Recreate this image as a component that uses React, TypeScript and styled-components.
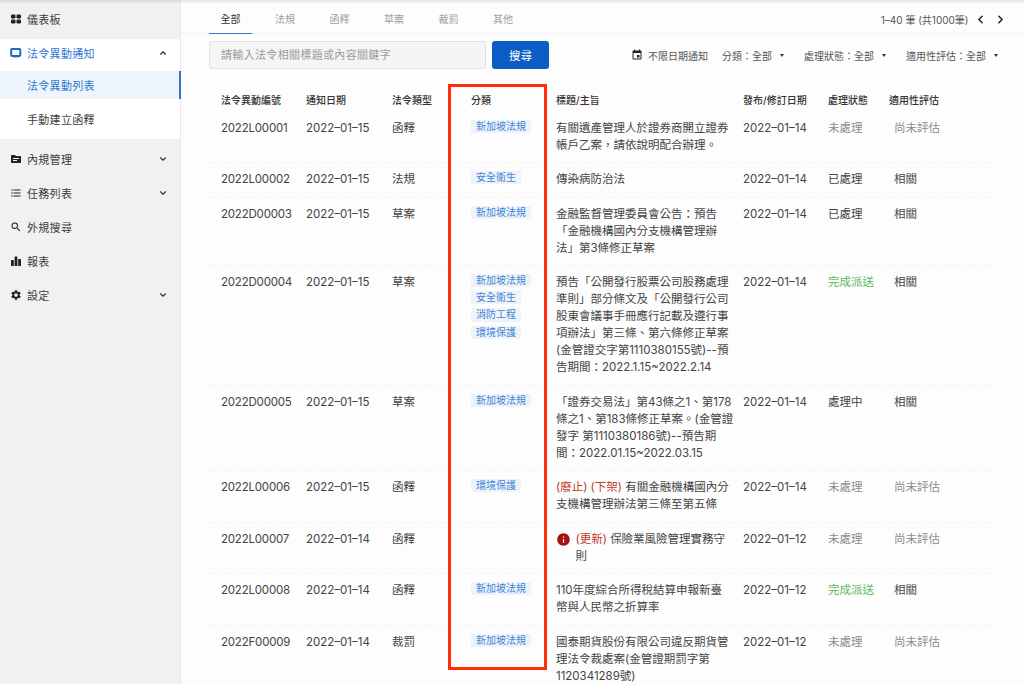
import { ReactNode } from 'react';
import styled, { createGlobalStyle } from 'styled-components';
import {
  ChevronDown,
  ChevronLeft,
  ChevronRight,
  ChevronUp,
} from 'lucide-react';
import {
  MdEvent,
  MdFormatListBulleted,
  MdInfo,
  MdSearch,
  MdSettings,
  MdTopic,
} from 'react-icons/md';

const fontStack = `Inter, "Noto Sans CJK TC", sans-serif`;

const GlobalStyle = createGlobalStyle`
  html, body {
    margin: 0;
    padding: 0;
    height: 684px;
    overflow: hidden;
    background: #fdfdfd;
    font-family: ${fontStack};
    color: #3a3a3a;
  }
`;

const Page = styled.div`
  position: relative;
  display: flex;
  width: 1024px;
  height: 684px;
  overflow: hidden;

  &::before {
    content: '';
    position: absolute;
    inset: 0 0 auto 0;
    height: 4px;
    background: linear-gradient(rgba(0, 0, 0, 0.09), rgba(0, 0, 0, 0));
    pointer-events: none;
  }
`;

const Sidebar = styled.nav`
  flex: none;
  width: 180px;
  height: 684px;
  background: #f1f1f1;
  border-right: 1px solid #e8e8e8;
`;

const NavItem = styled.div`
  display: flex;
  align-items: center;
  box-sizing: border-box;
  height: 34px;
  padding: 0 12px 0 10px;
  font-size: 11px;
  letter-spacing: 0.3px;
  color: #3d3d3d;

  svg.lead {
    flex: none;
    width: 12px;
    height: 12px;
    margin-right: 5px;
    color: #222;
  }

  svg.chev {
    color: #333;
    stroke-width: 2.6;
  }

  span {
    flex: 1;
  }
`;

const TopItem = styled(NavItem)`
  height: 39px;
  padding-bottom: 1px;
`;

const Group = styled.div`
  height: 100px;
  margin-bottom: 3px;
  background: #fff;
`;

const GroupHead = styled(NavItem)`
  height: 32px;
  padding-bottom: 4px;
  color: #2f76d2;

  svg.lead {
    color: #1d68c9;
  }
`;

const SubItem = styled.div<{ $active?: boolean }>`
  display: flex;
  align-items: center;
  box-sizing: border-box;
  height: 28px;
  padding-left: 27px;
  font-size: 11px;
  letter-spacing: 0.3px;
  color: ${(p) => (p.$active ? '#2f76d2' : '#3d3d3d')};
  background: ${(p) => (p.$active ? '#eef4fb' : 'transparent')};
  border-right: ${(p) => (p.$active ? '2px solid #2f76d2' : 'none')};
  margin-right: ${(p) => (p.$active ? '-1px' : '0')};
`;

const PlainSubItem = styled(SubItem)`
  height: 40px;
`;

const Main = styled.main`
  flex: 1;
  min-width: 0;
`;

const TabBar = styled.div`
  display: flex;
  align-items: center;
  gap: 11.5px;
  height: 33px;
  padding: 0 17px 0 28px;
  border-bottom: 1px solid #f4f4f4;
`;

const Tab = styled.div<{ $active?: boolean }>`
  position: relative;
  height: 33px;
  padding: 0 11.5px;
  line-height: 38px;
  font-size: 10px;
  color: ${(p) => (p.$active ? '#333' : '#a0a0a0')};

  &::after {
    content: '';
    display: ${(p) => (p.$active ? 'block' : 'none')};
    position: absolute;
    left: 0;
    right: 0;
    bottom: -1px;
    height: 1.5px;
    background: #2f76d2;
  }
`;

const Pager = styled.div`
  margin-left: auto;
  display: flex;
  align-items: center;
  font-size: 10px;
  color: #555;
  padding-top: 5px;
`;

const PagerBtn = styled.span`
  display: flex;
  margin-left: 5.5px;

  svg {
    width: 13px;
    height: 13px;
    color: #222;
    stroke-width: 2.8;
  }

  & + & {
    margin-left: 7px;
  }
`;

const Toolbar = styled.div`
  display: flex;
  align-items: center;
  height: 28px;
  margin-top: 7px;
  padding: 0 26px 0 28px;
`;

const SearchInput = styled.div`
  box-sizing: border-box;
  width: 277px;
  height: 28px;
  padding-left: 11px;
  line-height: 27px;
  font-size: 11px;
  letter-spacing: 0.33px;
  color: #9b9b9b;
  background: #f5f5f5;
  border: 1px solid #e2e2e2;
  border-radius: 3px;
`;

const SearchButton = styled.button`
  width: 57px;
  height: 28px;
  margin-left: 6px;
  padding: 0;
  border: none;
  border-radius: 3px;
  background: #0c5cc6;
  color: #fff;
  font: 11.5px ${fontStack};
`;

const Filters = styled.div`
  margin-left: auto;
  display: flex;
  align-items: center;
  font-size: 10px;
  color: #555;
  white-space: nowrap;
`;

const DateFilter = styled.div`
  display: flex;
  align-items: center;
  gap: 5px;
  margin-right: 14px;

  svg {
    width: 12px;
    height: 12px;
    color: #222;
  }
`;

const Filter = styled.div`
  display: flex;
  align-items: center;

  & + & {
    margin-left: 20px;
  }

  &::after {
    content: '';
    margin-left: 8px;
    border: 2.5px solid transparent;
    border-top: 3px solid #333;
    border-bottom: none;
  }
`;

const Table = styled.div`
  width: 787px;
  margin: 16px 0 0 28px;
`;

const gridColumns = '97px 86px 79px 85px 187px 85px 66px 1fr';

const HeadRow = styled.div`
  display: grid;
  grid-template-columns: ${gridColumns};
  box-sizing: border-box;
  height: 26.5px;
  padding-top: 1.5px;
  align-items: center;
  font-size: 10px;
  font-weight: 500;
  color: #333;
`;

const HeadCell = styled.div<{ $first?: boolean; $last?: boolean }>`
  padding-left: ${(p) => (p.$first ? '12px' : '0')};
  margin-left: ${(p) => (p.$last ? '-5px' : '0')};
  white-space: nowrap;
`;

const Row = styled.div`
  display: grid;
  grid-template-columns: ${gridColumns};
  padding: 8px 0 8.5px;
  border-bottom: 1px dashed #f3f3f3;
  font-size: 11.5px;
  line-height: 17px;
  color: #444;
`;

const Cell = styled.div`
  min-width: 0;
`;

const IdCell = styled.div`
  padding-left: 12px;
  letter-spacing: -0.2px;
`;

const TitleCell = styled.div`
  padding-right: 10px;
`;

const FixedLines = styled.div`
  white-space: pre;
`;

const TagList = styled.div`
  display: flex;
  flex-direction: column;
  align-items: flex-start;
  gap: 4px;
`;

const Tag = styled.span`
  height: 13.2px;
  padding: 0 5px;
  border-radius: 2px;
  background: #eef3fa;
  color: #3f83d8;
  font-size: 10px;
  line-height: 13px;
`;

const Status = styled.span<{ $tone?: 'muted' | 'done' }>`
  color: ${(p) =>
    p.$tone === 'muted' ? '#8c8c8c' : p.$tone === 'done' ? '#5cb85c' : '#444'};
`;

const Flag = styled.span`
  color: #c0392b;
`;

const AlertTitle = styled.div`
  display: flex;
  gap: 4.5px;
`;

const Alert = styled(MdInfo)`
  flex: none;
  width: 15px;
  height: 15px;
  margin-top: 1px;
  color: #a80f0f;
`;

const Callout = styled.div`
  position: absolute;
  left: 448px;
  top: 84px;
  width: 99px;
  height: 586px;
  box-sizing: border-box;
  border: 3px solid #ff2d0a;
  pointer-events: none;
`;

const DashboardIcon = () => (
  <svg className="lead" viewBox="0 0 12 12" fill="currentColor">
    <rect x="1" y="1.5" width="4.5" height="4" rx="1.2" />
    <rect x="6.5" y="1.5" width="4.5" height="4" rx="1.2" />
    <rect x="1" y="6.5" width="4.5" height="4" rx="1.2" />
    <rect x="6.5" y="6.5" width="4.5" height="4" rx="1.2" />
  </svg>
);

const NoticeIcon = () => (
  <svg className="lead" viewBox="0 0 12 12" fill="none">
    <rect
      x="1.2"
      y="2"
      width="9.1"
      height="7"
      rx="0.8"
      stroke="currentColor"
      strokeWidth="2"
    />
    <rect x="3" y="9" width="5.5" height="1.4" fill="currentColor" />
  </svg>
);

const ReportIcon = () => (
  <svg className="lead" viewBox="0 0 12 12" fill="currentColor">
    <rect x="1" y="5" width="2.8" height="6" rx="0.5" />
    <rect x="4.6" y="1.5" width="2.8" height="9.5" rx="0.5" />
    <rect x="8.2" y="4" width="2.8" height="7" rx="0.5" />
  </svg>
);

type Item = {
  id: string;
  notified: string;
  type: string;
  tags: string[];
  title: ReactNode;
  published: string;
  status: string;
  fit: string;
};

const rows: Item[] = [
  {
    id: '2022L00001',
    notified: '2022–01–15',
    type: '函釋',
    tags: ['新加坡法規'],
    title: '有關遺產管理人於證券商開立證券帳戶乙案\uFF0C請依說明配合辦理。',
    published: '2022–01–14',
    status: '未處理',
    fit: '尚未評估',
  },
  {
    id: '2022L00002',
    notified: '2022–01–15',
    type: '法規',
    tags: ['安全衛生'],
    title: '傳染病防治法',
    published: '2022–01–14',
    status: '已處理',
    fit: '相關',
  },
  {
    id: '2022D00003',
    notified: '2022–01–15',
    type: '草案',
    tags: ['新加坡法規'],
    title:
      '金融監督管理委員會公告\uFF1A預告「金融機構國內分支機構管理辦法」第3條修正草案',
    published: '2022–01–14',
    status: '已處理',
    fit: '相關',
  },
  {
    id: '2022D00004',
    notified: '2022–01–15',
    type: '草案',
    tags: ['新加坡法規', '安全衛生', '消防工程', '環境保護'],
    title:
      '預告「公開發行股票公司股務處理準則」部分條文及「公開發行公司股東會議事手冊應行記載及遵行事項辦法」第三條、第六條修正草案(金管證交字第1110380155號)--預告期間\uFF1A2022.1.15~2022.2.14',
    published: '2022–01–14',
    status: '完成派送',
    fit: '相關',
  },
  {
    id: '2022D00005',
    notified: '2022–01–15',
    type: '草案',
    tags: ['新加坡法規'],
    title: (
      <FixedLines>
        {
          '「證券交易法」第43條之1、第178\n條之1、第183條修正草案。(金管證\n發字 第1110380186號)--預告期\n間\uFF1A2022.01.15~2022.03.15'
        }
      </FixedLines>
    ),
    published: '2022–01–14',
    status: '處理中',
    fit: '相關',
  },
  {
    id: '2022L00006',
    notified: '2022–01–15',
    type: '函釋',
    tags: ['環境保護'],
    title: (
      <>
        <Flag>(廢止) (下架)</Flag> 有關金融機構國內分支機構管理辦法第三條至第五條
      </>
    ),
    published: '2022–01–14',
    status: '未處理',
    fit: '尚未評估',
  },
  {
    id: '2022L00007',
    notified: '2022–01–14',
    type: '函釋',
    tags: [],
    title: (
      <AlertTitle>
        <Alert />
        <div>
          <Flag>(更新)</Flag> 保險業風險管理實務守則
        </div>
      </AlertTitle>
    ),
    published: '2022–01–12',
    status: '未處理',
    fit: '尚未評估',
  },
  {
    id: '2022L00008',
    notified: '2022–01–14',
    type: '函釋',
    tags: ['新加坡法規'],
    title: '110年度綜合所得稅結算申報新臺幣與人民幣之折算率',
    published: '2022–01–12',
    status: '完成派送',
    fit: '相關',
  },
  {
    id: '2022F00009',
    notified: '2022–01–14',
    type: '裁罰',
    tags: ['新加坡法規'],
    title: '國泰期貨股份有限公司違反期貨管理法令裁處案(金管證期罰字第1120341289號)',
    published: '2022–01–12',
    status: '未處理',
    fit: '尚未評估',
  },
];

const tone = (status: string) =>
  status === '未處理' ? 'muted' : status === '完成派送' ? 'done' : undefined;

const tabs = ['全部', '法規', '函釋', '草案', '裁罰', '其他'];
const filters = [
  '分類\uFF1A全部',
  '處理狀態\uFF1A全部',
  '適用性評估\uFF1A全部',
];
const headers = [
  '法令異動編號',
  '通知日期',
  '法令類型',
  '分類',
  '標題/主旨',
  '發布/修訂日期',
  '處理狀態',
  '適用性評估',
];

export default function App() {
  return (
    <Page>
      <GlobalStyle />
      <Sidebar>
        <TopItem>
          <DashboardIcon />
          <span>儀表板</span>
        </TopItem>
        <Group>
          <GroupHead>
            <NoticeIcon />
            <span>法令異動通知</span>
            <ChevronUp className="chev" size={10} />
          </GroupHead>
          <SubItem $active>法令異動列表</SubItem>
          <PlainSubItem>手動建立函釋</PlainSubItem>
        </Group>
        <NavItem>
          <MdTopic className="lead" />
          <span>內規管理</span>
          <ChevronDown className="chev" size={10} />
        </NavItem>
        <NavItem>
          <MdFormatListBulleted className="lead" />
          <span>任務列表</span>
          <ChevronDown className="chev" size={10} />
        </NavItem>
        <NavItem>
          <MdSearch className="lead" />
          <span>外規搜尋</span>
        </NavItem>
        <NavItem>
          <ReportIcon />
          <span>報表</span>
        </NavItem>
        <NavItem>
          <MdSettings className="lead" />
          <span>設定</span>
          <ChevronDown className="chev" size={10} />
        </NavItem>
      </Sidebar>
      <Main>
        <TabBar>
          {tabs.map((tab, i) => (
            <Tab key={tab} $active={i === 0}>
              {tab}
            </Tab>
          ))}
          <Pager>
            1–40 筆 (共1000筆)
            <PagerBtn>
              <ChevronLeft />
            </PagerBtn>
            <PagerBtn>
              <ChevronRight />
            </PagerBtn>
          </Pager>
        </TabBar>
        <Toolbar>
          <SearchInput>請輸入法令相關標題或內容關鍵字</SearchInput>
          <SearchButton>搜尋</SearchButton>
          <Filters>
            <DateFilter>
              <MdEvent />
              不限日期通知
            </DateFilter>
            {filters.map((f) => (
              <Filter key={f}>{f}</Filter>
            ))}
          </Filters>
        </Toolbar>
        <Table>
          <HeadRow>
            {headers.map((h, i) => (
              <HeadCell key={h} $first={i === 0} $last={i === headers.length - 1}>
                {h}
              </HeadCell>
            ))}
          </HeadRow>
          {rows.map((row) => (
            <Row key={row.id}>
              <IdCell>{row.id}</IdCell>
              <Cell>{row.notified}</Cell>
              <Cell>{row.type}</Cell>
              <TagList>
                {row.tags.map((tag) => (
                  <Tag key={tag}>{tag}</Tag>
                ))}
              </TagList>
              <TitleCell>{row.title}</TitleCell>
              <Cell>{row.published}</Cell>
              <Cell>
                <Status $tone={tone(row.status)}>{row.status}</Status>
              </Cell>
              <Cell>
                <Status $tone={row.fit === '相關' ? undefined : 'muted'}>
                  {row.fit}
                </Status>
              </Cell>
            </Row>
          ))}
        </Table>
      </Main>
      <Callout />
    </Page>
  );
}
